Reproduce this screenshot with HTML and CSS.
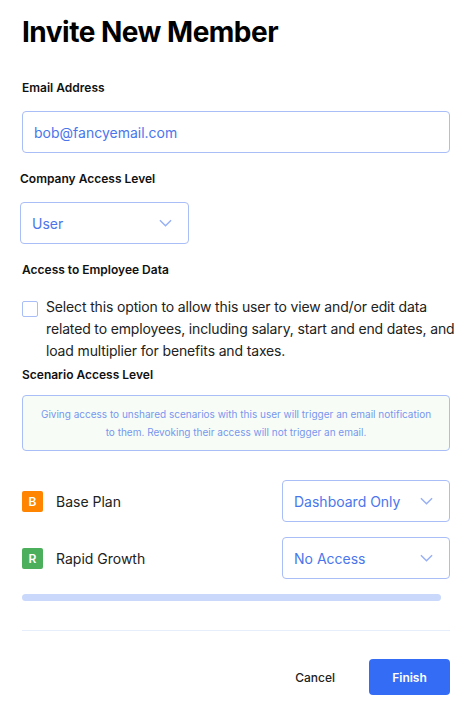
FILE: index.html
```html
<!DOCTYPE html>
<html lang="en">

<head>
    <meta charset="UTF-8">
    <meta name="viewport" content="width=device-width, initial-scale=1.0">
    <title>Invite New Member</title>
    <link rel="stylesheet" href="styles.css">
</head>

<body>
    <!-- Invite modal -->
    <div class="modal">
        <h1>Invite New Member</h1>

        <label class="field-label">Email Address</label>
        <div class="input">bob@fancyemail.com</div>

        <div class="shifted">
            <label class="field-label">Company Access Level</label>
            <div class="select select-user">
                <span>User</span>
                <svg class="chevron" viewBox="0 0 14 8"><path d="M1 1l6 6 6-6" /></svg>
            </div>
        </div>

        <label class="field-label">Access to Employee Data</label>
        <div class="check-row">
            <span class="checkbox"></span>
            <p>Select this option to allow this user to view and/or edit data related to employees, including salary, start and end dates, and load multiplier for benefits and taxes.</p>
        </div>

        <label class="field-label scenario-label">Scenario Access Level</label>
        <div class="info-box">
            Giving access to unshared scenarios with this user will trigger an email notification to them. Revoking their access will not trigger an email.
        </div>

        <div class="scenario-row">
            <span class="badge orange">B</span>
            <span class="scenario-name">Base Plan</span>
            <div class="select">
                <span>Dashboard Only</span>
                <svg class="chevron" viewBox="0 0 14 8"><path d="M1 1l6 6 6-6" /></svg>
            </div>
        </div>
        <div class="scenario-row">
            <span class="badge green">R</span>
            <span class="scenario-name">Rapid Growth</span>
            <div class="select">
                <span>No Access</span>
                <svg class="chevron" viewBox="0 0 14 8"><path d="M1 1l6 6 6-6" /></svg>
            </div>
        </div>

        <div class="scrollbar"></div>
        <hr class="divider">

        <div class="actions">
            <button class="cancel-btn">Cancel</button>
            <button class="finish-btn">Finish</button>
        </div>
    </div>
</body>

</html>
```

FILE: styles.css
```css
/* General styles */
* {
    margin: 0;
    padding: 0;
    box-sizing: border-box;
}

body {
    font-family: 'Inter', 'Liberation Sans', sans-serif;
    background-color: #fff;
    color: #222;
}

/* Modal */
.modal {
    width: 474px;
    height: 714px;
    background-color: #fff;
    padding: 15px 24px 0 22px;
}

.modal h1 {
    font-size: 28px;
    line-height: 34px;
    font-weight: 700;
    color: #000;
    letter-spacing: -0.5px;
}

.field-label {
    display: block;
    margin-top: 18px;
    font-size: 12px;
    line-height: 16px;
    font-weight: 600;
    color: #111;
}

.modal h1 + .field-label {
    margin-top: 31px;
}

.input,
.select {
    height: 42px;
    border: 1px solid #a9bdf7;
    border-radius: 4px;
    background-color: #fff;
    display: flex;
    align-items: center;
    padding: 0 11px;
    font-size: 14px;
    color: #4a76eb;
}

.input {
    margin-top: 15px;
}

.shifted {
    margin-left: -2px;
}

.select {
    justify-content: space-between;
    width: 168px;
}

.select-user {
    margin-top: 15px;
    width: 169px;
}

.chevron {
    width: 13px;
    height: 8px;
    fill: none;
    stroke: #96aff5;
    stroke-width: 1.5;
    margin-right: 5px;
}

.check-row {
    display: flex;
    gap: 8px;
    margin-top: 18px;
    margin-right: -18px;
}

.checkbox {
    flex-shrink: 0;
    width: 16px;
    height: 16px;
    margin-top: 5px;
    border: 1px solid #a9bdf7;
    border-radius: 2px;
}

.check-row p {
    font-size: 14px;
    line-height: 22px;
    letter-spacing: -0.15px;
    color: #222;
}

.scenario-label {
    margin-top: 5px;
}

.info-box {
    margin-top: 12px;
    height: 56px;
    border: 1px solid #a9bdf7;
    border-radius: 4px;
    background-color: #f7fdf6;
    padding: 9px 16px 0;
    font-size: 10px;
    line-height: 18px;
    color: #7896ef;
    text-align: center;
}

.scenario-row {
    display: flex;
    align-items: center;
    margin-top: 15px;
}

.info-box + .scenario-row {
    margin-top: 29px;
}

.badge {
    width: 21px;
    height: 21px;
    border-radius: 2px;
    color: #fff;
    font-size: 12px;
    font-weight: 600;
    display: flex;
    align-items: center;
    justify-content: center;
}

.orange {
    background-color: #ff8500;
}

.green {
    background-color: #4caf5c;
}

.scenario-name {
    flex: 1;
    margin-left: 13px;
    font-size: 14px;
    color: #222;
}

.scrollbar {
    margin-top: 15px;
    width: 419px;
    height: 7px;
    border-radius: 4px;
    background-color: #c9d8fb;
}

.divider {
    margin-top: 29px;
    border: none;
    border-top: 1px solid #e6edfb;
}

.actions {
    display: flex;
    justify-content: flex-end;
    align-items: center;
    gap: 34px;
    margin-top: 28px;
}

.cancel-btn {
    background: none;
    border: none;
    font-family: inherit;
    font-size: 12px;
    font-weight: 500;
    color: #222;
}

.finish-btn {
    width: 81px;
    height: 36px;
    background-color: #346cf6;
    color: #fff;
    border: none;
    border-radius: 4px;
    font-family: inherit;
    font-size: 12px;
    font-weight: 600;
}
```
